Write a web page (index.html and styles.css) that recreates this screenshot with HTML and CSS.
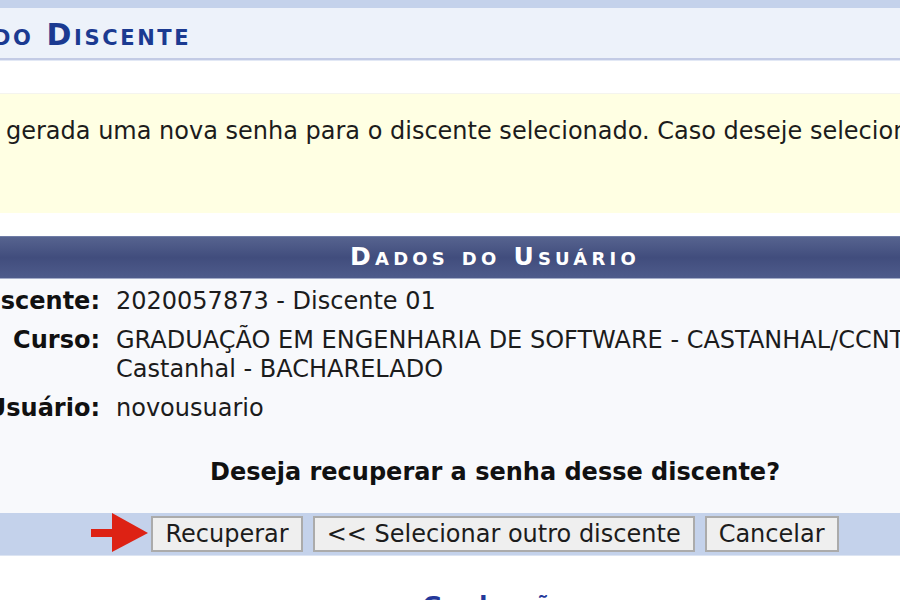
FILE: index.html
```html
<!DOCTYPE html>
<html lang="pt-BR">
<head>
<meta charset="utf-8">
<title>Recuperar Senha do Discente</title>
<link rel="stylesheet" href="styles.css">
</head>
<body>
<div class="topbar"></div>
<h2 class="page-title">do Discente</h2>
<div class="message">
  <p>gerada uma nova senha para o discente selecionado. Caso deseje selecionar outro discente, clique no botão abaixo.</p>
</div>
<div class="form">
  <div class="form-head">Dados do Usuário</div>
  <div class="form-body">
    <div class="row">
      <div class="label">Discente:</div>
      <div class="value">2020057873 - Discente 01</div>
    </div>
    <div class="row">
      <div class="label">Curso:</div>
      <div class="value">GRADUAÇÃO EM ENGENHARIA DE SOFTWARE - CASTANHAL/CCNT<br>Castanhal - BACHARELADO</div>
    </div>
    <div class="row">
      <div class="label">Usuário:</div>
      <div class="value">novousuario</div>
    </div>
    <div class="question">Deseja recuperar a senha desse discente?</div>
  </div>
  <div class="form-foot">
    <svg class="arrow" width="60" height="40" viewBox="0 0 60 40" aria-hidden="true">
      <rect x="0" y="16" width="22" height="8" fill="#dd2214"/>
      <polygon points="21,0 57,20 21,39" fill="#dd2214"/>
    </svg>
    <button class="btn">Recuperar</button>
    <button class="btn">&lt;&lt; Selecionar outro discente</button>
    <button class="btn">Cancelar</button>
  </div>
  <div class="back"><a href="#">Graduação</a></div>
</div>
</body>
</html>
```
FILE: styles.css
```css
html, body {
  margin: 0;
  padding: 0;
  background: #ffffff;
}
body {
  width: 900px;
  height: 600px;
  overflow: hidden;
  font-family: "DejaVu Sans", Verdana, sans-serif;
  font-size: 24px;
  line-height: 29px;
  color: #1c1c1c;
}
.topbar {
  height: 8px;
  background: #c4d2eb;
}
.page-title {
  margin: 0;
  height: 52px;
  box-sizing: border-box;
  padding-top: 12px;
  background: #edf2fa;
  border-bottom: 2px solid #c3cbe5;
  box-shadow: 0 1px 0 #e2e8f5;
  font-size: 30px;
  line-height: 30px;
  font-weight: bold;
  font-variant: small-caps;
  letter-spacing: 2.6px;
  color: #1b3a91;
  text-indent: -7px;
  white-space: nowrap;
}
.message {
  margin-top: 33px;
  height: 120px;
  box-sizing: border-box;
  background: #ffffe3;
  border-top: 1px solid #f4f4ee;
  padding: 23px 0 0 6px;
}
.message p {
  margin: 0;
  white-space: nowrap;
}
.form {
  margin-left: -110px;
  width: 1210px;
  margin-top: 23px;
}
.form-head {
  height: 43px;
  box-sizing: border-box;
  background: linear-gradient(#56638f, #414d7d 50%, #4e5b8b);
  border-top: 1px solid #6f7ca6;
  border-bottom: 1px solid #a3acc8;
  color: #ffffff;
  font-size: 25px;
  font-weight: bold;
  font-variant: small-caps;
  letter-spacing: 4.2px;
  text-align: center;
  line-height: 40px;
}
.form-body {
  background: #f8f9fc;
  padding-top: 3px;
  height: 234px;
  box-sizing: border-box;
}
.row {
  display: grid;
  grid-template-columns: 210px 1fr;
  column-gap: 16px;
  padding: 5px 0;
}
.label {
  text-align: right;
  font-weight: bold;
  color: #111111;
}
.value {
  white-space: nowrap;
}
.question {
  padding-top: 30px;
  text-align: center;
  font-weight: bold;
  color: #111111;
}
.form-foot {
  position: relative;
  height: 43px;
  box-sizing: border-box;
  background: #c4d2eb;
  border-bottom: 1px solid #dce4f2;
  display: flex;
  justify-content: center;
  align-items: flex-start;
  gap: 10px;
  padding-top: 3px;
}
.btn {
  height: 36px;
  box-sizing: border-box;
  padding: 0 12px;
  font-family: inherit;
  font-size: 24px;
  line-height: 30px;
  color: #1c1c1c;
  background: #efefef;
  border: 2px solid #ababab;
  border-radius: 0;
}
.arrow {
  position: absolute;
  left: 201px;
  top: 0;
}
.back {
  margin-top: 36px;
  text-align: center;
}
.back a {
  color: #24389a;
  font-weight: bold;
  text-decoration: none;
}
```
